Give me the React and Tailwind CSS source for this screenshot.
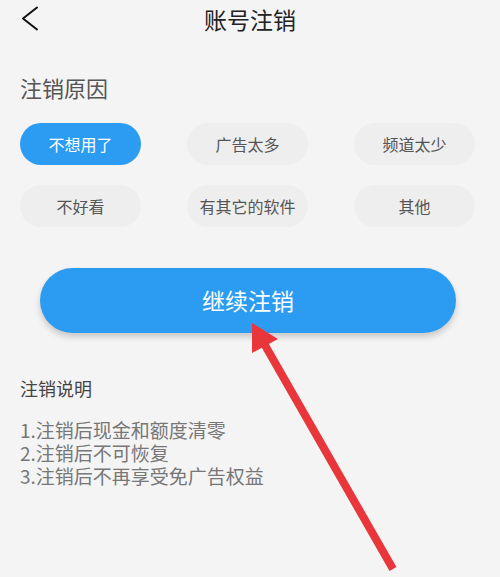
import { useState } from "react";

const REASONS = ["不想用了", "广告太多", "频道太少", "不好看", "有其它的软件", "其他"];

const NOTES = [
  "1.注销后现金和额度清零",
  "2.注销后不可恢复",
  "3.注销后不再享受免广告权益",
];

const App = () => {
  const [picked, setPicked] = useState(0);

  return (
    <div
      className="relative w-[500px] h-[577px] overflow-hidden bg-[#f4f4f4]"
      style={{ fontFamily: '"Noto Sans CJK SC", "Noto Sans", sans-serif' }}
    >
      {/* Header */}
      <div className="grid grid-cols-[1fr_auto_1fr] items-center h-[38px] px-[20px]">
        <svg width="20" height="26" viewBox="0 0 20 26" className="text-[#111]">
          <polyline
            points="17,1.5 3,12.5 17,23.5"
            fill="none"
            stroke="currentColor"
            strokeWidth="2"
            strokeLinecap="round"
            strokeLinejoin="round"
          />
        </svg>
        <h1 className="text-[23px] leading-none text-[#222]">账号注销</h1>
        <span />
      </div>

      {/* Reasons */}
      <div className="px-[20px] pt-[38px]">
        <h2 className="text-[22px] leading-none text-[#555]">注销原因</h2>

        <div className="grid grid-cols-3 gap-x-[46px] gap-y-[20px] mt-[25px] w-[455px]">
          {REASONS.map((r, i) => (
            <button
              key={r}
              onClick={() => setPicked(i)}
              className={`h-[42px] rounded-full text-[16px] ${
                picked === i
                  ? "bg-[#2b9cf2] text-white"
                  : "bg-[#eeeeee] text-[#555]"
              }`}
            >
              {r}
            </button>
          ))}
        </div>
      </div>

      {/* Continue */}
      <div className="px-[40px] mt-[41px]">
        <button className="w-[416px] h-[65px] rounded-full bg-[#2b9cf2] text-white text-[23px] shadow-[0_4px_6px_rgba(0,0,0,0.18)]">
          继续注销
        </button>
      </div>

      {/* Notes */}
      <div className="px-[20px] mt-[46px]">
        <h3 className="text-[18px] leading-none text-[#444]">注销说明</h3>
        <ul className="mt-[21px] text-[19px] leading-[23px] text-[#777]">
          {NOTES.map((n) => (
            <li key={n}>{n}</li>
          ))}
        </ul>
      </div>

      {/* Red annotation arrow */}
      <svg
        className="absolute inset-0 pointer-events-none"
        width="500"
        height="577"
        viewBox="0 0 500 577"
      >
        <line x1="393" y1="569" x2="262" y2="340" stroke="#e8363b" strokeWidth="8" />
        <polygon points="252,323 278,339 252,353" fill="#e8363b" />
      </svg>
    </div>
  );
};

export default App;
